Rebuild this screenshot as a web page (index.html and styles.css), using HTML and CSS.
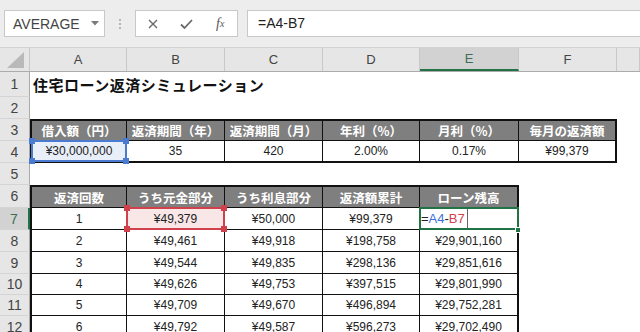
FILE: index.html
```html
<!DOCTYPE html>
<html lang="ja">
<head>
    <meta charset="UTF-8">
    <meta name="viewport" content="width=device-width, initial-scale=1.0">
    <title>住宅ローン返済シミュレーション</title>
    <link rel="stylesheet" href="styles.css">
</head>
<body>
    <div class="toolbar">
        <div class="namebox">
            <span>AVERAGE</span>
            <svg width="8" height="5" viewBox="0 0 8 5"><path d="M0 0h8L4 4.5z" fill="#7a7a7a"/></svg>
        </div>
        <div class="grip"><i></i><i></i><i></i></div>
        <div class="fx-buttons">
            <span class="slot">
                <svg width="10" height="10" viewBox="0 0 10 10"><path d="M1 1l8 8M9 1l-8 8" stroke="#6a6a6a" stroke-width="1.4" fill="none"/></svg>
            </span>
            <span class="slot">
                <svg width="13" height="10" viewBox="0 0 13 10"><path d="M1 5.5l3.5 3.5L12 1" stroke="#6a6a6a" stroke-width="1.8" fill="none"/></svg>
            </span>
            <span class="slot fx"><em>f</em><sub>x</sub></span>
        </div>
        <div class="formula">=A4-B7</div>
    </div>

    <div class="sheet">
        <div class="row head">
            <div class="corner">
                <svg width="20" height="18" viewBox="0 0 20 18"><path d="M19 1V17H2z" fill="#b9b9b9"/></svg>
            </div>
            <div class="ch">A</div>
            <div class="ch">B</div>
            <div class="ch">C</div>
            <div class="ch">D</div>
            <div class="ch sel">E</div>
            <div class="ch">F</div>
            <div class="ch"></div>
        </div>

        <div class="row r-title">
            <div class="rh">1</div>
            <div class="title">住宅ローン返済シミュレーション</div>
        </div>
        <div class="row">
            <div class="rh">2</div>
        </div>

        <!-- 借入条件 -->
        <div class="row">
            <div class="rh">3</div>
            <div class="th t l">借入額（円）</div>
            <div class="th t">返済期間（年）</div>
            <div class="th t">返済期間（月）</div>
            <div class="th t">年利（%）</div>
            <div class="th t">月利（%）</div>
            <div class="th t r">毎月の返済額</div>
        </div>
        <div class="row">
            <div class="rh">4</div>
            <div class="td l b ref blue">¥30,000,000<i class="hd tl"></i><i class="hd tr"></i><i class="hd bl"></i><i class="hd br"></i></div>
            <div class="td b">35</div>
            <div class="td b">420</div>
            <div class="td b">2.00%</div>
            <div class="td b">0.17%</div>
            <div class="td b r">¥99,379</div>
        </div>
        <div class="row">
            <div class="rh">5</div>
        </div>

        <!-- 返済表 -->
        <div class="row r6">
            <div class="rh">6</div>
            <div class="th t l">返済回数</div>
            <div class="th t">うち元金部分</div>
            <div class="th t">うち利息部分</div>
            <div class="th t">返済額累計</div>
            <div class="th t r">ローン残高</div>
        </div>
        <div class="row">
            <div class="rh sel">7</div>
            <div class="td l">1</div>
            <div class="td ref red">¥49,379<i class="hd tl"></i><i class="hd tr"></i><i class="hd bl"></i><i class="hd br"></i></div>
            <div class="td">¥50,000</div>
            <div class="td">¥99,379</div>
            <div class="td r editing"><span class="eq">=<b class="blue-t">A4</b>-<b class="red-t">B7</b></span><i class="caret"></i><i class="fill"></i></div>
        </div>
        <div class="row">
            <div class="rh">8</div>
            <div class="td l">2</div>
            <div class="td">¥49,461</div>
            <div class="td">¥49,918</div>
            <div class="td">¥198,758</div>
            <div class="td r">¥29,901,160</div>
        </div>
        <div class="row">
            <div class="rh">9</div>
            <div class="td l">3</div>
            <div class="td">¥49,544</div>
            <div class="td">¥49,835</div>
            <div class="td">¥298,136</div>
            <div class="td r">¥29,851,616</div>
        </div>
        <div class="row short">
            <div class="rh">10</div>
            <div class="td l">4</div>
            <div class="td">¥49,626</div>
            <div class="td">¥49,753</div>
            <div class="td">¥397,515</div>
            <div class="td r">¥29,801,990</div>
        </div>
        <div class="row short">
            <div class="rh">11</div>
            <div class="td l">5</div>
            <div class="td">¥49,709</div>
            <div class="td">¥49,670</div>
            <div class="td">¥496,894</div>
            <div class="td r">¥29,752,281</div>
        </div>
        <div class="row">
            <div class="rh">12</div>
            <div class="td l">6</div>
            <div class="td">¥49,792</div>
            <div class="td">¥49,587</div>
            <div class="td">¥596,273</div>
            <div class="td r">¥29,702,490</div>
        </div>
    </div>
</body>
</html>
```

FILE: styles.css
```css
* {
    box-sizing: border-box;
}

body {
    margin: 0;
    height: 332px;
    overflow: hidden;
    background: #fff;
    color: #222;
    font-family: "Liberation Sans", "Noto Sans CJK JP", sans-serif;
}

/* 数式バー */
.toolbar {
    height: 48px;
    display: flex;
    align-items: flex-start;
    padding: 10px 0 0 4px;
    background: #ededed;
    border-bottom: 1px solid #d2d2d2;
}

.namebox {
    width: 101px;
    height: 27px;
    display: flex;
    align-items: center;
    justify-content: space-between;
    padding: 0 5px 0 8px;
    background: #fff;
    border: 1px solid #c8c8c8;
    font-size: 14px;
    color: #444;
}

.grip {
    width: 30px;
    height: 27px;
    display: flex;
    flex-direction: column;
    align-items: center;
    justify-content: center;
    gap: 2px;
}

.grip i {
    width: 2px;
    height: 2px;
    background: #b4b4b4;
}

.fx-buttons {
    width: 103px;
    height: 27px;
    display: flex;
    align-items: center;
    background: #fff;
    border: 1px solid #c8c8c8;
}

.slot {
    width: 35px;
    display: flex;
    justify-content: center;
    align-items: center;
}

.fx {
    font-family: "Liberation Serif", serif;
    color: #555;
    font-size: 14px;
}

.fx sub {
    font-style: italic;
    font-size: 10px;
    vertical-align: -1px;
}

.formula {
    flex: 1;
    height: 27px;
    margin-left: 9px;
    padding-left: 10px;
    background: #fff;
    border: 1px solid #c8c8c8;
    border-right: none;
    font-size: 14px;
    line-height: 25px;
    color: #222;
}

/* シート */
.row {
    display: grid;
    grid-template-columns: 30px 97px 98px 98px 97px 99px 98px 1fr;
    height: 22px;
}

.row.head {
    height: 24px;
    background: #e6e6e6;
    border-bottom: 1px solid #ababab;
}

.row.r-title {
    height: 25px;
}

.row.r6 {
    height: 23px;
}

.row.short {
    height: 21px;
}

.corner {
    display: flex;
    align-items: flex-end;
    justify-content: center;
    padding-bottom: 2px;
    border-right: 1px solid #c8c8c8;
}

.ch {
    display: flex;
    align-items: center;
    justify-content: center;
    border-right: 1px solid #c8c8c8;
    font-size: 13px;
    color: #444;
}

.ch.sel {
    background: #d2d2d2;
    color: #3c6e55;
    border-bottom: 2px solid #217346;
}

.rh {
    display: flex;
    align-items: center;
    justify-content: center;
    background: #e6e6e6;
    border-right: 1px solid #ababab;
    border-bottom: 1px solid #d4d4d4;
    font-size: 14px;
    color: #444;
}

.rh.sel {
    background: #d2d2d2;
    color: #3c6e55;
    border-right: 2px solid #217346;
}

.title {
    grid-column: 2 / -1;
    display: flex;
    align-items: center;
    padding-left: 3px;
    font-family: "Noto Sans CJK JP", sans-serif;
    font-size: 15px;
    font-weight: bold;
    letter-spacing: 0.5px;
    color: #111;
}

/* 表 */
.th,
.td {
    display: flex;
    align-items: center;
    justify-content: center;
    border-right: 1px solid #111;
    border-bottom: 1px solid #111;
    white-space: nowrap;
}

.th {
    background: #7f7f7f;
    color: #fff;
    font-family: "Noto Sans CJK JP", sans-serif;
    font-size: 12.5px;
    font-weight: bold;
}

.td {
    font-size: 12px;
    color: #222;
}

.t { border-top: 2px solid #111; }
.l { border-left: 2px solid #111; }
.r { border-right: 2px solid #111; }
.b { border-bottom: 2px solid #111; }

/* 参照セル */
.ref {
    position: relative;
}

.ref::before {
    content: "";
    position: absolute;
    inset: -1px;
    border: 2px solid var(--ref);
}

.ref.blue {
    --ref: #4a7bd0;
    background: #e9eff9;
}

.ref.red {
    --ref: #d0414c;
    background: #f9e7e8;
}

.hd {
    position: absolute;
    width: 6px;
    height: 6px;
    background: var(--ref);
}

.hd.tl { top: -3px; left: -3px; }
.hd.tr { top: -3px; right: -3px; }
.hd.bl { bottom: -3px; left: -3px; }
.hd.br { bottom: -3px; right: -3px; }

/* 編集中セル */
.editing {
    position: relative;
    justify-content: flex-start;
    padding-left: 1px;
    font-size: 13px;
}

.editing::before {
    content: "";
    position: absolute;
    inset: -1px -2px -1px -1px;
    border: 2px solid #217346;
}

.eq b {
    font-weight: normal;
}

.blue-t { color: #3d6fd4; }
.red-t { color: #d0414c; }

.caret {
    width: 1px;
    height: 100%;
    margin-left: 2px;
    background: #666;
}

.fill {
    position: absolute;
    right: -4px;
    bottom: -4px;
    width: 6px;
    height: 6px;
    background: #217346;
    border: 1px solid #fff;
}
```
